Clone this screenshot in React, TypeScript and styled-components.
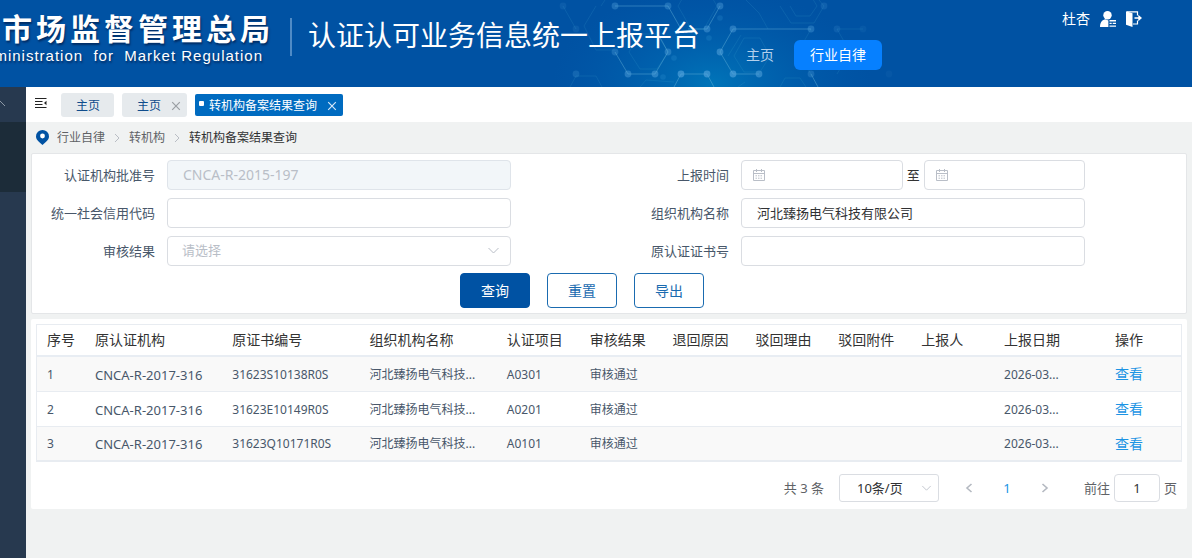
import React from "react";
import styled, { createGlobalStyle, css } from "styled-components";

const GlobalStyle = createGlobalStyle`
  *, *::before, *::after { box-sizing: border-box; }
  body { margin: 0; }
  body, button, input, select, table {
    font-family: "Noto Sans", "Noto Sans CJK SC", sans-serif;
  }
  button, input, select { margin: 0; padding: 0; }
  svg { display: block; }
`;

const Page = styled.div`
  min-height: 100vh;
  display: flex;
  flex-direction: column;
  background: #f0f2f2;
  font-size: 13px;
  line-height: 20px;
  color: #333;
`;

/* ---------- header ---------- */

const Header = styled.header`
  position: relative;
  display: flex;
  align-items: flex-start;
  height: 87px;
  overflow: hidden;
  background: #0052a3;
  color: #fff;
  white-space: nowrap;
`;

const Pattern = styled.svg`
  position: absolute;
  left: 540px;
  top: 0;
  width: 360px;
  height: 87px;
  pointer-events: none;
`;

const Brand = styled.div`
  position: relative;
  flex: 0 0 272px;
  min-width: 0;
  display: flex;
  flex-direction: column;
  align-items: flex-end;
  padding-top: 11px;
  text-shadow: 1px 2px 2px rgba(0, 20, 60, 0.6);
`;

const BrandName = styled.div`
  font-size: 30px;
  line-height: 36px;
  font-weight: 700;
  letter-spacing: 4px;
  margin-right: -2px;
`;

const BrandSub = styled.div`
  padding-right: 9px;
  font-family: "Liberation Sans", Arial, sans-serif;
  font-size: 15px;
  line-height: 18px;
  letter-spacing: 1px;
  white-space: pre;
`;

const Divider = styled.span`
  flex: 0 0 2px;
  height: 38px;
  margin: 18px 16px 0 18px;
  background: #4f8bc6;
`;

const Title = styled.h1`
  position: relative;
  margin: 15px 0 0;
  font-size: 28px;
  line-height: 40px;
  font-weight: 400;
`;

const Nav = styled.nav`
  position: relative;
  display: flex;
  gap: 4px;
  margin: 40px 0 0 30px;
`;

const NavLink = styled.a<{ $active?: boolean }>`
  padding: 0 16px;
  border-radius: 6px;
  font-size: 14px;
  line-height: 30px;
  text-decoration: none;
  color: ${(p) => (p.$active ? "#fff" : "#b4d0ec")};
  background: ${(p) => (p.$active ? "#0680ff" : "transparent")};
`;

const UserArea = styled.div`
  position: relative;
  display: flex;
  align-items: center;
  gap: 10px;
  margin-left: auto;
  padding: 9px 50px 0 0;
  font-size: 14px;
`;

const IconButton = styled.button`
  display: flex;
  border: 0;
  background: none;
  color: inherit;
`;

/* ---------- frame ---------- */

const Body = styled.div`
  flex: 1;
  display: flex;
`;

const Sidebar = styled.aside`
  flex: 0 0 26px;
  background: #27394f;
  overflow: hidden;
`;

const SideHead = styled.div`
  height: 35px;
  padding-top: 12px;
  color: #8c98a5;
`;

const SideSub = styled.div`
  height: 70px;
  background: #1c2c39;
`;

const Main = styled.main`
  flex: 1;
  min-width: 0;
`;

const TabBar = styled.div`
  display: flex;
  align-items: center;
  height: 35px;
  padding-left: 8px;
  background: #fff;
  font-size: 12px;
`;

const Tab = styled.div<{ $active?: boolean }>`
  display: flex;
  align-items: center;
  height: 24px;
  margin-right: 8px;
  padding: 2px 14px 0 15px;
  border-radius: 3px;
  background: #e6eaed;
  color: #0f4c8c;
  ${(p) =>
    p.$active &&
    css`
      height: 22px;
      padding: 2px 6px 0 4px;
      border-radius: 2px;
      background: #006bc0;
      color: #fff;
    `}
`;

const TabDot = styled.span`
  width: 5px;
  height: 5px;
  margin: 0 5px 4px 0;
  border-radius: 1px;
  background: #fff;
`;

const TabClose = styled(IconButton)<{ $active?: boolean }>`
  margin-left: 10px;
  margin-right: ${(p) => (p.$active ? "0" : "-8px")};
  color: ${(p) => (p.$active ? "#d5e8f8" : "#9a9ea3")};
`;

const Collapse = styled(IconButton)`
  margin: 0 14px 4px 0;
  color: #222;
`;

const Crumbs = styled.nav`
  display: flex;
  align-items: center;
  height: 31px;
  padding-left: 10px;
  font-size: 12px;
  color: #606266;
`;

const Pin = styled.svg`
  margin-right: 8px;
`;

const CrumbArrow = styled.svg`
  margin: 0 8px;
  color: #b9bdc4;
`;

const Current = styled.span`
  color: #303133;
`;

/* ---------- search form ---------- */

const SearchForm = styled.form`
  margin: 0 5px 5px;
  padding: 6px 3px 5px;
  border: 1px solid #e4e6e8;
  border-radius: 2px;
  background: #fff;
`;

const Fields = styled.div`
  display: grid;
  grid-template-columns: 1fr 1fr;
  row-gap: 8px;
`;

const Field = styled.div`
  display: flex;
  align-items: center;
`;

const Label = styled.label`
  flex: 0 0 132px;
  padding-right: 12px;
  text-align: right;
  line-height: 30px;
  color: #48576a;
`;

const Control = styled.div`
  position: relative;
  flex: 0 0 60%;
  display: flex;
  align-items: center;
`;

const box = css`
  width: 100%;
  height: 30px;
  padding: 0 15px 2px;
  border: 1px solid #dadde2;
  border-radius: 4px;
  background: #fff;
  font-size: 13px;
  color: #303133;
  outline: none;
`;

const Input = styled.input`
  ${box}
  &:disabled {
    background: #f2f6f9;
    border-color: #dfe4ea;
    color: #b9bec7;
    font-size: 14px;
  }
`;

const Select = styled.select`
  ${box}
  padding-left: 14px;
  appearance: none;
  color: #b9bec7;
`;

const Caret = styled.svg`
  position: absolute;
  right: 11px;
  color: #b9bec7;
  pointer-events: none;
`;

const DateBox = styled.div`
  position: relative;
  flex: 1;
  display: flex;
  align-items: center;
`;

const DateIcon = styled.svg`
  position: absolute;
  left: 12px;
  color: #b9bec7;
  pointer-events: none;
`;

const To = styled.span`
  padding: 0 4px;
`;

const Actions = styled.div`
  display: flex;
  justify-content: center;
  gap: 17px;
  padding-right: 54px;
  margin-top: 7px;
`;

const Button = styled.button<{ $primary?: boolean }>`
  width: 70px;
  height: 35px;
  padding-bottom: 2px;
  border: 1px solid ${(p) => (p.$primary ? "#0052a3" : "#1a6bb0")};
  border-radius: 4px;
  font-size: 14px;
  background: ${(p) => (p.$primary ? "#0052a3" : "#fff")};
  color: ${(p) => (p.$primary ? "#fff" : "#1a6bb0")};
`;

/* ---------- results ---------- */

const Results = styled.section`
  margin: 0 5px;
  padding: 5px 5px 7px;
  border-radius: 2px;
  background: #fff;
`;

const Table = styled.table`
  width: 100%;
  table-layout: fixed;
  border-spacing: 0;
  border: 1px solid #e8ecf1;
`;

const Th = styled.th<{ $w?: string; $center?: boolean }>`
  width: ${(p) => p.$w ?? "auto"};
  height: 32px;
  padding: 0 0 0 10px;
  border-bottom: 2px solid #e8edf3;
  font-size: 14px;
  font-weight: 400;
  white-space: nowrap;
  color: #333;
  text-align: left;
  ${(p) => p.$center && "padding: 0; text-align: center;"}
`;

const Td = styled.td<{ $code?: boolean; $center?: boolean }>`
  height: 35px;
  padding: 1px 0 0 ${(p) => (p.$center ? "0" : "10px")};
  border-bottom: 1px solid #e8ecf1;
  font-size: ${(p) => (p.$code ? "13px" : "12px")};
  white-space: nowrap;
  overflow: hidden;
  color: #48576a;
  text-align: ${(p) => (p.$center ? "center" : "left")};
`;

const Tr = styled.tr`
  &:nth-child(odd) { background: #f9f9f9; }
  &:last-child td { height: 34px; }
`;

const ViewLink = styled.a`
  font-size: 14px;
  color: #1c94e4;
  text-decoration: none;
`;

const Pagination = styled.div`
  display: flex;
  justify-content: flex-end;
  align-items: center;
  margin-top: 12px;
  padding-right: 5px;
  color: #606266;
`;

const SizeBox = styled.div`
  position: relative;
  display: flex;
  align-items: center;
  width: 100px;
  margin: 0 24px 0 15px;
`;

const SizeSelect = styled.select`
  ${box}
  height: 28px;
  padding: 0 17px;
  border-radius: 3px;
  appearance: none;
`;

const SizeCaret = styled(Caret)`
  right: 7px;
`;

const PageButton = styled.button<{ $current?: boolean }>`
  display: flex;
  align-items: center;
  justify-content: center;
  width: 12px;
  height: 28px;
  margin-right: 26px;
  border: 0;
  background: none;
  font-size: 13px;
  color: ${(p) => (p.$current ? "#1c94e4" : "#b4b9c1")};
`;

const JumpLabel = styled.label`
  display: flex;
  align-items: center;
  margin-left: 7px;
`;

const JumpInput = styled(Input)`
  width: 46px;
  height: 28px;
  margin: 0 4px;
  padding: 0;
  text-align: center;
`;

/* ---------- drawings ---------- */

const NODES: [number, number, number][] = [
  [563, 6, 0.3], [615, 6, 0.8], [668, 6, 0.8], [720, 6, 0.9], [824, 6, 0.4],
  [576, 29, 0.3], [707, 29, 1], [733, 29, 1], [811, 29, 0.8], [837, 29, 0.35],
  [863, 29, 0.2], [615, 52, 0.7], [668, 52, 0.9], [720, 52, 1.2], [576, 74, 0.5],
  [628, 74, 1], [655, 74, 1.1], [681, 74, 1.4], [707, 74, 1.4], [733, 74, 1.4],
  [759, 74, 1.2], [811, 74, 0.6], [889, 74, 0.15],
];

const HexPattern = () => (
  <Pattern viewBox="540 0 360 87" aria-hidden="true">
    <defs>
      <radialGradient id="glow" cx="50%" cy="50%" r="50%">
        <stop offset="0" stopColor="#0080c0" stopOpacity="0.75" />
        <stop offset="1" stopColor="#0060b0" stopOpacity="0" />
      </radialGradient>
    </defs>
    <ellipse cx="712" cy="84" rx="160" ry="96" fill="url(#glow)" />
    <g fill="none" stroke="#6cb8dc" strokeOpacity="0.42" strokeWidth="1">
      <path d="M615 6H668L681 29M720 6L707 29H688M733 29H811M733 29L720 52L733 74H759M615 52L628 74H655L668 52L657 32M674 87L681 74H707L714 87M811 74L818 87" />
    </g>
    <g fill="none" stroke="#5ec4e0" strokeOpacity="0.12" strokeWidth="1">
      <path d="M563 6L576 29M601 6L607 -3M640 34H657L668 52L657 69H640L629 52ZM688 -11L678 6L691 29H704L717 6L707 -11M744 38H760L770 56L760 72H744L734 56ZM728 56L741 35M780 6L791 23H814L824 6L814 -6M790 6L796 16H810L817 6L811 -4M768 29L759 13L746 0M811 74L798 52L811 29M837 29H863M837 29L850 52L837 74M570 87L576 76H596L602 87M745 82L738 87M640 87L646 80L674 82M780 87L785 78H800L806 87M596 6L584 26L596 50H615" />
    </g>
    {NODES.map(([x, y, o]) => (
      <circle key={`${x}-${y}`} cx={x} cy={y} r="3.4" fill="#5aa8e0" fillOpacity={o * 0.42} />
    ))}
    {[[720, 18], [709, 38], [674, 58], [663, 77]].map(([x, y]) => (
      <circle key={`${x}-${y}`} cx={x} cy={y} r="2.8" fill="#3aa0dc" fillOpacity="0.2" />
    ))}
  </Pattern>
);

const UserIcon = () => (
  <svg width="16" height="16" viewBox="0 0 16 16" fill="currentColor">
    <circle cx="7.5" cy="4.2" r="4.2" />
    <path d="M5.2 8.2L8.4 9.6V16H0C0 12 1.5 9 5.2 8.2Z" />
    <path d="M9.5 9H16V10.4H9.5ZM9.5 11.8H11.7V13H9.5ZM12.7 11.8H16V13H12.7ZM9.5 14.4H16V15.8H9.5Z" />
  </svg>
);

const ExitIcon = () => (
  <svg width="16" height="16" viewBox="0 0 16 16" fill="none">
    <path d="M1 0.8H11.5V4.5M11.5 9.5V13H7" stroke="currentColor" strokeWidth="1.2" />
    <path d="M0 0.3L6.5 2.2V16L0 13.8Z" fill="currentColor" />
    <path d="M8.5 6.2H12.3V3.8L16 7L12.3 10.2V7.8H8.5Z" fill="currentColor" />
  </svg>
);

const CollapseIcon = () => (
  <svg width="13" height="12" viewBox="0 0 13 12" stroke="currentColor" strokeWidth="1.2">
    <path d="M1 1.5H12.5M1 4.5H8.5M1 7.5H8.5M1 10.5H12.5" />
    <path d="M12.5 3.8V8.2L10 6Z" fill="currentColor" stroke="none" />
  </svg>
);

const CloseIcon = () => (
  <svg width="10" height="10" viewBox="0 0 10 10" stroke="currentColor" strokeWidth="1.2">
    <path d="M1.2 1.2L8.8 8.8M8.8 1.2L1.2 8.8" />
  </svg>
);

const PinIcon = () => (
  <Pin width="13" height="15" viewBox="0 0 13 15" aria-hidden="true">
    <path d="M6.5 0A6.5 6.5 0 0 0 0 6.4C0 10 3.6 12.2 6.5 15C9.4 12.2 13 10 13 6.4A6.5 6.5 0 0 0 6.5 0Z" fill="#0052a3" />
    <circle cx="6.5" cy="6" r="2.4" fill="#fff" />
  </Pin>
);

const Arrow = () => (
  <CrumbArrow width="8" height="10" viewBox="0 0 8 10" fill="none" stroke="currentColor" aria-hidden="true">
    <path d="M2 1L6 5L2 9" />
  </CrumbArrow>
);

const DownCaret = () => (
  <Caret width="13" height="8" viewBox="0 0 13 8" fill="none" stroke="currentColor" aria-hidden="true">
    <path d="M1.5 1L6.5 6L11.5 1" />
  </Caret>
);

const CalendarIcon = () => (
  <DateIcon width="12" height="12" viewBox="0 0 12 12" fill="none" stroke="currentColor" aria-hidden="true">
    <path d="M0.5 1.5H11.5V11.5H0.5ZM0.5 4.5H11.5M3.5 0V3M8.5 0V3" />
    <path d="M2.5 6.8H9.5M2.5 9.2H9.5" strokeDasharray="1.5 1" />
  </DateIcon>
);

/* ---------- data ---------- */

const COLUMNS: { title: string; width?: string }[] = [
  { title: "序号", width: "48px" },
  { title: "原认证机构", width: "12%" },
  { title: "原证书编号", width: "12%" },
  { title: "组织机构名称", width: "12%" },
  { title: "认证项目" },
  { title: "审核结果" },
  { title: "退回原因" },
  { title: "驳回理由" },
  { title: "驳回附件" },
  { title: "上报人" },
  { title: "上报日期" },
];

const ROWS = [
  ["CNCA-R-2017-316", "31623S10138R0S", "A0301"],
  ["CNCA-R-2017-316", "31623E10149R0S", "A0201"],
  ["CNCA-R-2017-316", "31623Q10171R0S", "A0101"],
];

export default function App() {
  return (
    <Page>
      <GlobalStyle />
      <Header>
        <HexPattern />
        <Brand>
          <BrandName>市场监督管理总局</BrandName>
          <BrandSub>{"ministration  for  Market Regulation"}</BrandSub>
        </Brand>
        <Divider />
        <Title>认证认可业务信息统一上报平台</Title>
        <Nav>
          <NavLink href="#home">主页</NavLink>
          <NavLink href="#discipline" $active>行业自律</NavLink>
        </Nav>
        <UserArea>
          <span>杜杏</span>
          <IconButton type="button" aria-label="用户"><UserIcon /></IconButton>
          <IconButton type="button" aria-label="退出"><ExitIcon /></IconButton>
        </UserArea>
      </Header>

      <Body>
        <Sidebar>
          <SideHead>
            <svg width="6" height="8" viewBox="0 0 6 8" fill="none" stroke="currentColor" aria-hidden="true">
              <path d="M-4 6L0 2L5 7" />
            </svg>
          </SideHead>
          <SideSub />
        </Sidebar>

        <Main>
          <TabBar>
            <Collapse type="button" aria-label="折叠"><CollapseIcon /></Collapse>
            <Tab>主页</Tab>
            <Tab>
              主页
              <TabClose type="button" aria-label="关闭"><CloseIcon /></TabClose>
            </Tab>
            <Tab $active>
              <TabDot />
              转机构备案结果查询
              <TabClose type="button" aria-label="关闭" $active><CloseIcon /></TabClose>
            </Tab>
          </TabBar>

          <Crumbs>
            <PinIcon />
            <span>行业自律</span>
            <Arrow />
            <span>转机构</span>
            <Arrow />
            <Current>转机构备案结果查询</Current>
          </Crumbs>

          <SearchForm onSubmit={(e) => e.preventDefault()}>
            <Fields>
              <Field>
                <Label htmlFor="approval">认证机构批准号</Label>
                <Control><Input id="approval" defaultValue="CNCA-R-2015-197" disabled /></Control>
              </Field>
              <Field>
                <Label htmlFor="from">上报时间</Label>
                <Control>
                  <DateBox><Input id="from" /><CalendarIcon /></DateBox>
                  <To>至</To>
                  <DateBox><Input aria-label="至" /><CalendarIcon /></DateBox>
                </Control>
              </Field>
              <Field>
                <Label htmlFor="credit">统一社会信用代码</Label>
                <Control><Input id="credit" /></Control>
              </Field>
              <Field>
                <Label htmlFor="org">组织机构名称</Label>
                <Control><Input id="org" defaultValue="河北臻扬电气科技有限公司" /></Control>
              </Field>
              <Field>
                <Label htmlFor="result">审核结果</Label>
                <Control>
                  <Select id="result"><option>请选择</option></Select>
                  <DownCaret />
                </Control>
              </Field>
              <Field>
                <Label htmlFor="cert">原认证证书号</Label>
                <Control><Input id="cert" /></Control>
              </Field>
            </Fields>
            <Actions>
              <Button type="submit" $primary>查询</Button>
              <Button type="reset">重置</Button>
              <Button type="button">导出</Button>
            </Actions>
          </SearchForm>

          <Results>
            <Table>
              <thead>
                <tr>
                  {COLUMNS.map((c) => <Th key={c.title} $w={c.width}>{c.title}</Th>)}
                  <Th $w="104px" $center>操作</Th>
                </tr>
              </thead>
              <tbody>
                {ROWS.map(([org, cert, item], i) => (
                  <Tr key={cert}>
                    <Td>{i + 1}</Td>
                    <Td $code>{org}</Td>
                    <Td>{cert}</Td>
                    <Td>河北臻扬电气科技...</Td>
                    <Td>{item}</Td>
                    <Td>审核通过</Td>
                    <Td />
                    <Td />
                    <Td />
                    <Td />
                    <Td>2026-03...</Td>
                    <Td $center><ViewLink href="#view">查看</ViewLink></Td>
                  </Tr>
                ))}
              </tbody>
            </Table>

            <Pagination>
              <span>共 3 条</span>
              <SizeBox>
                <SizeSelect aria-label="每页条数"><option>10条/页</option></SizeSelect>
                <SizeCaret width="11" height="7" viewBox="0 0 13 8" fill="none" stroke="currentColor" aria-hidden="true">
                  <path d="M1.5 1L6.5 6L11.5 1" />
                </SizeCaret>
              </SizeBox>
              <PageButton type="button" aria-label="上一页">
                <svg width="8" height="10" viewBox="0 0 8 10" fill="none" stroke="currentColor" strokeWidth="1.6"><path d="M6.5 1L2 5L6.5 9" /></svg>
              </PageButton>
              <PageButton type="button" $current>1</PageButton>
              <PageButton type="button" aria-label="下一页">
                <svg width="8" height="10" viewBox="0 0 8 10" fill="none" stroke="currentColor" strokeWidth="1.6"><path d="M1.5 1L6 5L1.5 9" /></svg>
              </PageButton>
              <JumpLabel>
                前往
                <JumpInput defaultValue="1" />
                页
              </JumpLabel>
            </Pagination>
          </Results>
        </Main>
      </Body>
    </Page>
  );
}
